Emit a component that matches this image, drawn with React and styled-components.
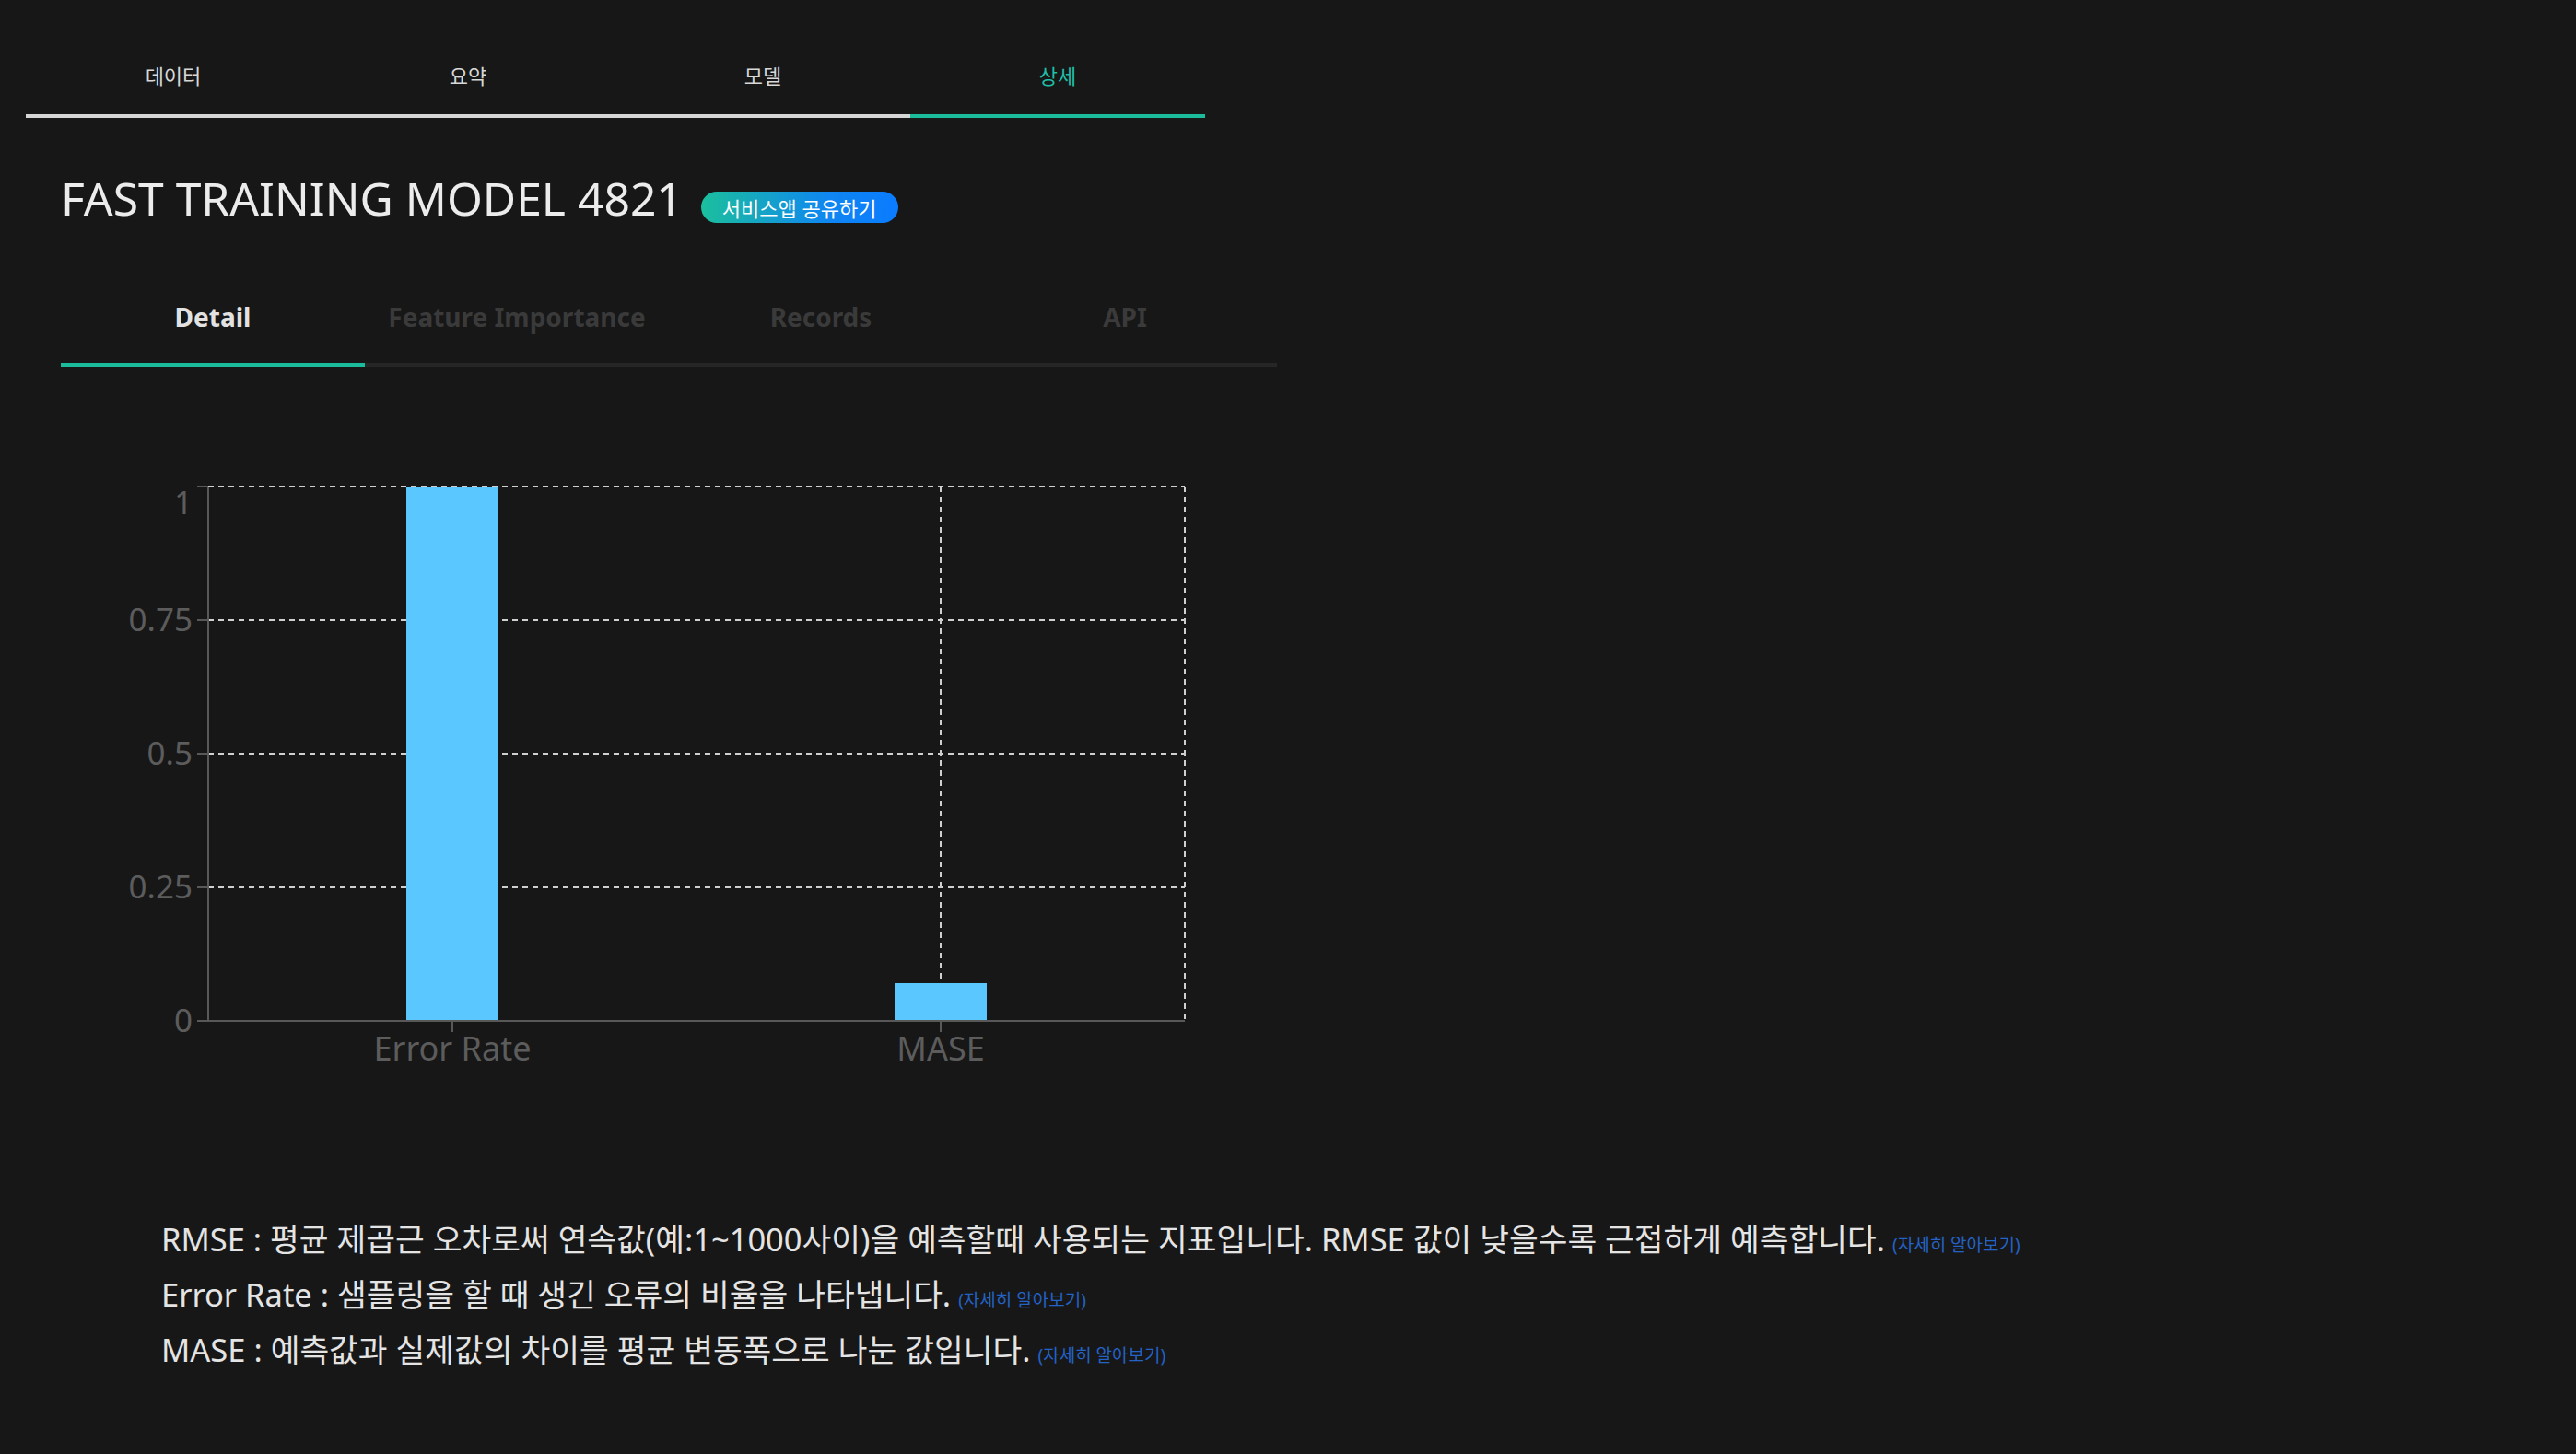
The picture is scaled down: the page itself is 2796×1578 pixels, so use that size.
import styled, { createGlobalStyle } from "styled-components";

const GlobalStyle = createGlobalStyle`
  body {
    margin: 0;
    background-color: #171717;
    font-family: "Noto Sans", "Noto Sans CJK KR", sans-serif;
  }
`;

const TOP_TABS = ["데이터", "요약", "모델", "상세"];
const SUB_TABS = ["Detail", "Feature Importance", "Records", "API"];

const BARS = [
  { label: "Error Rate", value: 1 },
  { label: "MASE", value: 0.0707 },
];

const DESCRIPTIONS = [
  "RMSE : 평균 제곱근 오차로써 연속값(예:1~1000사이)을 예측할때 사용되는 지표입니다. RMSE 값이 낮을수록 근접하게 예측합니다.",
  "Error Rate : 샘플링을 할 때 생긴 오류의 비율을 나타냅니다.",
  "MASE : 예측값과 실제값의 차이를 평균 변동폭으로 나눈 값입니다.",
];

const StyledPage = styled.div`
  min-height: 100vh;
  background-color: #171717;
  color: #e6e6e6;
`;

const StyledTopTabs = styled.nav`
  margin-left: 28px;
  width: 1280px;
  display: grid;
  grid-template-columns: repeat(4, 1fr);
`;

const StyledTopTab = styled.div`
  padding: 67px 0 27px;
  line-height: 30px;
  font-size: 22px;
  text-align: center;
  color: ${({ $active }) => ($active ? "#1fbfa6" : "#d8d8d8")};
  border-bottom: 4px solid ${({ $active }) => ($active ? "#1abc9c" : "#d6d6d6")};
`;

const StyledContent = styled.main`
  padding-left: 66px;
`;

const StyledTitleRow = styled.div`
  margin-top: 57px;
  display: flex;
  align-items: flex-end;
`;

const StyledTitle = styled.h1`
  margin: 0;
  font-size: 49.8px;
  line-height: 60px;
  font-weight: 400;
  color: #ececec;
`;

const StyledShareBadge = styled.span`
  margin: 0 0 3px 20px;
  height: 34px;
  padding: 0 23px;
  border-radius: 17px;
  display: flex;
  align-items: center;
  font-size: 22px;
  color: #ffffff;
  background: linear-gradient(90deg, #1bbf9d 0%, #0f86f2 65%, #0a7bff 100%);
`;

const StyledSubTabs = styled.div`
  margin-top: 79px;
  width: 1320px;
  display: grid;
  grid-template-columns: repeat(4, 1fr);
`;

const StyledSubTab = styled.div`
  padding-bottom: 30px;
  line-height: 40px;
  font-size: 28px;
  font-weight: 700;
  text-align: center;
  color: ${({ $active }) => ($active ? "#e2e2e2" : "#3a3a3a")};
  border-bottom: 4px solid ${({ $active }) => ($active ? "#1abc9c" : "#262626")};
`;

const StyledChart = styled.svg`
  display: block;
  margin-top: 82px;
  font-family: "Noto Sans", sans-serif;
`;

const StyledDescriptions = styled.div`
  margin-top: 135px;
  padding-left: 109px;
  padding-bottom: 80px;
`;

const StyledDescLine = styled.p`
  margin: 0;
  height: 60px;
  font-size: 34.5px;
  line-height: 60px;
  color: #e4e4e4;
  white-space: nowrap;
`;

const StyledMoreLink = styled.a`
  margin-left: 8px;
  font-size: 19px;
  line-height: 20px;
  color: #2462c6;
  text-decoration: none;
`;

// chart geometry, in svg pixels
const X0 = 160;
const X1 = 1220;
const Y_TOP = 48;
const Y_BOTTOM = 628;
const GRID = "#cfcfcf";
const AXIS = "#585858";

const yOf = (v) => Y_BOTTOM - (Y_BOTTOM - Y_TOP) * v;
const xOf = (i) => X0 + ((X1 - X0) / 4) * (1 + 2 * i);

const MetricChart = () => {
  const ticks = [
    { v: 1, text: "1", dy: 30 },
    { v: 0.75, text: "0.75", dy: 12 },
    { v: 0.5, text: "0.5", dy: 12 },
    { v: 0.25, text: "0.25", dy: 12 },
    { v: 0, text: "0", dy: 12 },
  ];

  return (
    <StyledChart width="1320" height="700" viewBox="0 0 1320 700">
      {ticks
        .filter((t) => t.v > 0)
        .map((t) => (
          <line
            key={`g${t.v}`}
            x1={X0}
            x2={X1}
            y1={yOf(t.v)}
            y2={yOf(t.v)}
            stroke={GRID}
            strokeWidth="2"
            strokeDasharray="6 5"
          />
        ))}
      {BARS.map((b, i) => (
        <line
          key={`v${b.label}`}
          x1={xOf(i)}
          x2={xOf(i)}
          y1={Y_TOP}
          y2={Y_BOTTOM}
          stroke={GRID}
          strokeWidth="2"
          strokeDasharray="6 5"
        />
      ))}
      <line x1={X1} x2={X1} y1={Y_TOP} y2={Y_BOTTOM} stroke={GRID} strokeWidth="2" strokeDasharray="6 5" />

      {BARS.map((b, i) => (
        <rect
          key={b.label}
          x={xOf(i) - 50}
          y={yOf(b.value)}
          width="100"
          height={Y_BOTTOM - yOf(b.value)}
          fill="#5ac8fe"
        />
      ))}

      <line x1={X0} x2={X0} y1={Y_TOP} y2={Y_BOTTOM} stroke={AXIS} strokeWidth="2" />
      <line x1={X0 - 12} x2={X1} y1={Y_BOTTOM} y2={Y_BOTTOM} stroke={AXIS} strokeWidth="2" />

      {ticks.map((t) => (
        <g key={t.text}>
          <line x1={X0 - 12} x2={X0} y1={yOf(t.v)} y2={yOf(t.v)} stroke={AXIS} strokeWidth="2" />
          <text x={X0 - 17} y={yOf(t.v) + t.dy} fontSize="35" fill="#5c5c5c" textAnchor="end">
            {t.text}
          </text>
        </g>
      ))}

      {BARS.map((b, i) => (
        <g key={`x${b.label}`}>
          <line x1={xOf(i)} x2={xOf(i)} y1={Y_BOTTOM} y2={Y_BOTTOM + 12} stroke={AXIS} strokeWidth="2" />
          <text x={xOf(i)} y={Y_BOTTOM + 43} fontSize="36" fill="#5c5c5c" textAnchor="middle">
            {b.label}
          </text>
        </g>
      ))}
    </StyledChart>
  );
};

export default function App() {
  return (
    <StyledPage>
      <GlobalStyle />
      <StyledTopTabs>
        {TOP_TABS.map((tab) => (
          <StyledTopTab key={tab} $active={tab === "상세"}>
            {tab}
          </StyledTopTab>
        ))}
      </StyledTopTabs>

      <StyledContent>
        <StyledTitleRow>
          <StyledTitle>FAST TRAINING MODEL 4821</StyledTitle>
          <StyledShareBadge>서비스앱 공유하기</StyledShareBadge>
        </StyledTitleRow>

        <StyledSubTabs>
          {SUB_TABS.map((tab) => (
            <StyledSubTab key={tab} $active={tab === "Detail"}>
              {tab}
            </StyledSubTab>
          ))}
        </StyledSubTabs>

        <MetricChart />

        <StyledDescriptions>
          {DESCRIPTIONS.map((text) => (
            <StyledDescLine key={text}>
              {text}
              <StyledMoreLink href="#">(자세히 알아보기)</StyledMoreLink>
            </StyledDescLine>
          ))}
        </StyledDescriptions>
      </StyledContent>
    </StyledPage>
  );
}
